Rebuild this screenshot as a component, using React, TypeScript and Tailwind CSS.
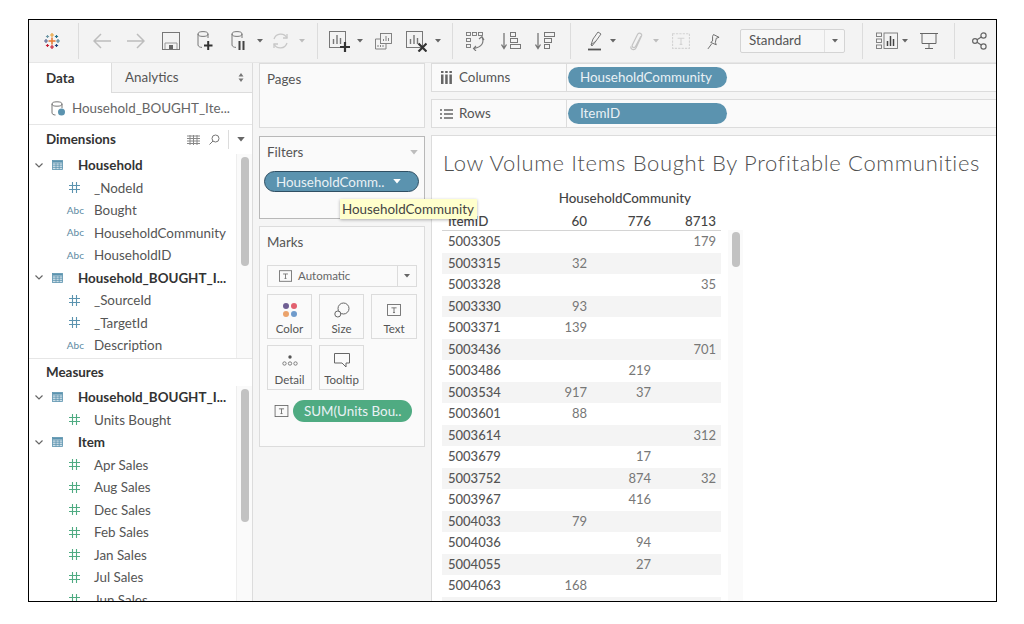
import React from 'react';

const dims = [
  { t: 'g', label: 'Household' },
  { t: 'n', label: '_NodeId' },
  { t: 'a', label: 'Bought' },
  { t: 'a', label: 'HouseholdCommunity' },
  { t: 'a', label: 'HouseholdID' },
  { t: 'g', label: 'Household_BOUGHT_I...' },
  { t: 'n', label: '_SourceId' },
  { t: 'n', label: '_TargetId' },
  { t: 'a', label: 'Description' },
];

const measures = [
  { t: 'g', label: 'Household_BOUGHT_I...' },
  { t: 'm', label: 'Units Bought' },
  { t: 'g', label: 'Item' },
  { t: 'm', label: 'Apr Sales' },
  { t: 'm', label: 'Aug Sales' },
  { t: 'm', label: 'Dec Sales' },
  { t: 'm', label: 'Feb Sales' },
  { t: 'm', label: 'Jan Sales' },
  { t: 'm', label: 'Jul Sales' },
  { t: 'm', label: 'Jun Sales' },
];

const rows = [
  ['5003305', '', '', '179'],
  ['5003315', '32', '', ''],
  ['5003328', '', '', '35'],
  ['5003330', '93', '', ''],
  ['5003371', '139', '', ''],
  ['5003436', '', '', '701'],
  ['5003486', '', '219', ''],
  ['5003534', '917', '37', ''],
  ['5003601', '88', '', ''],
  ['5003614', '', '', '312'],
  ['5003679', '', '17', ''],
  ['5003752', '', '874', '32'],
  ['5003967', '', '416', ''],
  ['5004033', '79', '', ''],
  ['5004036', '', '94', ''],
  ['5004055', '', '27', ''],
  ['5004063', '168', '', ''],
  ['', '', '', ''],
];

type P = { className?: string };

const Sep = ({ className = '' }: P) => <div className={`w-px h-[36px] shrink-0 bg-[#dcdcdc] ${className}`} />;
const Caret = ({ className = '', c = '#666' }: P & { c?: string }) => (
  <svg viewBox="0 0 6 4" className={`w-[6px] h-[4px] shrink-0 ${className}`}><path d="M0 0h6L3 3.6z" fill={c} /></svg>
);

const Logo = ({ className = '' }: P) => {
  const cross = (x: number, y: number, r: number, c: string, w = 1.2) => (
    <path d={`M${x - r} ${y}H${x + r}M${x} ${y - r}V${y + r}`} stroke={c} strokeWidth={w} />
  );
  return (
    <svg viewBox="0 0 18 18" className={`w-[18px] h-[18px] shrink-0 ${className}`} fill="none">
      {cross(9, 9, 3.5, '#e8762c', 1.5)}
      {cross(9, 3, 2, '#e8a33d')}
      {cross(9, 15, 2, '#c72035')}
      {cross(3, 9, 2, '#5b6591')}
      {cross(15, 9, 2, '#59879b')}
      {cross(4.5, 4.5, 1.6, '#7099a6')}
      {cross(13.5, 4.5, 1.6, '#1f6f8b')}
      {cross(4.5, 13.5, 1.6, '#c72035')}
      {cross(13.5, 13.5, 1.6, '#1f447e')}
    </svg>
  );
};

const Arrow = ({ className = '', flip = false }: P & { flip?: boolean }) => (
  <svg viewBox="0 0 18 16" className={`w-[18px] h-[16px] shrink-0 ${className}`} fill="none" stroke="#bdbdbd" strokeWidth="1.5">
    <path d={flip ? 'M0 8H17M10 1l7 7-7 7' : 'M18 8H1M8 1L1 8l7 7'} />
  </svg>
);

const Save = ({ className = '' }: P) => (
  <svg viewBox="0 0 18 18" className={`w-[18px] h-[18px] shrink-0 ${className}`} fill="none" stroke="#777" strokeWidth="1">
    <rect x=".5" y=".5" width="17" height="17" />
    <path d="M3 17v-6h12v6" stroke="#999" />
    <rect x="7" y="13" width="4" height="4" fill="#666" stroke="none" />
  </svg>
);

const Cyl = () => (
  <>
    <ellipse cx="6" cy="3" rx="5" ry="2.4" />
    <path d="M1 3v11c0 1.4 2 2.4 4 2.4M11 3v4" />
  </>
);

const DsPlus = ({ className = '' }: P) => (
  <svg viewBox="0 0 16 20" className={`w-[16px] h-[20px] shrink-0 ${className}`} fill="none" stroke="#777" strokeWidth="1">
    <Cyl />
    <path d="M7 14.5h8.5M11.2 10v9" stroke="#333" strokeWidth="2" />
  </svg>
);

const DsPause = ({ className = '' }: P) => (
  <svg viewBox="0 0 14 20" className={`w-[14px] h-[20px] shrink-0 ${className}`} fill="none" stroke="#777" strokeWidth="1">
    <Cyl />
    <path d="M8.5 10v9M12.5 10v9" stroke="#444" strokeWidth="2" />
  </svg>
);

const Refresh = ({ className = '' }: P) => (
  <svg viewBox="0 0 19 18" className={`w-[19px] h-[18px] shrink-0 ${className}`} fill="none" stroke="#c8c8c8" strokeWidth="1.3">
    <path d="M3 7a7 7 0 0 1 13-1M16 11a7 7 0 0 1-13 1" />
    <path d="M16 2v4h-4M3 16v-4h4" />
  </svg>
);

const BarBox = () => (
  <>
    <rect x=".5" y=".5" width="16" height="16" />
    <path d="M4.5 13V8M8 13V4M11.5 13V7" strokeWidth="1.4" />
  </>
);

const BarPlus = ({ className = '' }: P) => (
  <svg viewBox="0 0 21 21" className={`w-[21px] h-[21px] shrink-0 ${className}`} fill="none" stroke="#777">
    <BarBox />
    <path d="M11 16h10M16 11v10" stroke="#333" strokeWidth="2.2" />
  </svg>
);

const BarDup = ({ className = '' }: P) => (
  <svg viewBox="0 0 17 17" className={`w-[17px] h-[17px] shrink-0 ${className}`} fill="none" stroke="#777" strokeWidth=".9">
    <rect x="5.5" y=".5" width="11" height="10" fill="#f3f3f3" />
    <path d="M8.5 8V6M11 8V3M13.5 8V5" />
    <path d="M5 6H.5v10H11v-5" />
    <path d="M3 14v-2M5.5 14v-2M8 14v-2" />
  </svg>
);

const BarX = ({ className = '' }: P) => (
  <svg viewBox="0 0 21 21" className={`w-[21px] h-[21px] shrink-0 ${className}`} fill="none" stroke="#777">
    <BarBox />
    <path d="M12.5 12.5l8 8M20.5 12.5l-8 8" stroke="#333" strokeWidth="2.2" />
  </svg>
);

const Swap = ({ className = '' }: P) => (
  <svg viewBox="0 0 19 19" className={`w-[19px] h-[19px] shrink-0 ${className}`} fill="none" stroke="#777" strokeWidth=".9">
    <rect x=".5" y=".5" width="4" height="3" />
    <rect x="6.5" y=".5" width="4" height="3" />
    <rect x="12.5" y=".5" width="4" height="3" />
    <rect x=".5" y="6.5" width="4" height="3" />
    <rect x=".5" y="12.5" width="4" height="3" />
    <path d="M16 5c2.5 5.5 0 10-8 11.5M13 7l3-2.500 2 3.500M10 14l-2.500 2.500L10 19" strokeWidth="1.100" />
  </svg>
);

const SortAsc = ({ className = '' }: P) => (
  <svg viewBox="0 0 20 18" className={`w-[20px] h-[18px] shrink-0 ${className}`} fill="none" stroke="#777">
    <path d="M3 1v15M.5 12.500 3 16.500l2.500-4" strokeWidth="1.300" />
    <rect x="9.500" y=".5" width="5" height="4" />
    <rect x="9.500" y="6.500" width="7" height="4" />
    <rect x="9.500" y="12.500" width="10" height="4" />
  </svg>
);

const SortDesc = ({ className = '' }: P) => (
  <svg viewBox="0 0 20 18" className={`w-[20px] h-[18px] shrink-0 ${className}`} fill="none" stroke="#777">
    <path d="M3 1v15M.5 12.500 3 16.500l2.500-4" strokeWidth="1.300" />
    <rect x="9.500" y=".5" width="10" height="4" />
    <rect x="9.500" y="6.500" width="7" height="4" />
    <rect x="9.500" y="12.500" width="5" height="4" />
  </svg>
);

const Highlight = ({ className = '' }: P) => (
  <svg viewBox="0 0 14 20" className={`w-[14px] h-[20px] shrink-0 ${className}`} fill="none" stroke="#777">
    <path d="M3 14 5 8l5-7 3 2-5 7z" />
    <path d="M3 14l1 1 4-5" />
    <path d="M0 18.500h13" strokeWidth="1.800" stroke="#555" />
  </svg>
);

const Clip = ({ className = '' }: P) => (
  <svg viewBox="0 0 13 20" className={`w-[13px] h-[20px] shrink-0 ${className}`} fill="none" stroke="#c4c4c4" strokeWidth="1.200">
    <path d="M11 5 5.500 15.500c-1 2-4 1-3.200-1.500L7.500 3.500c1.200-2.500 5-1 4 1.500L6 17c-1.500 3-6 1.500-5-1.500" />
  </svg>
);

const TBox = ({ className = '', dim = false }: P & { dim?: boolean }) => (
  <svg viewBox="0 0 16 14" className={`shrink-0 ${className}`} fill="none" stroke={dim ? '#d4d4d4' : '#666'}>
    <rect x=".5" y=".5" width="15" height="13" strokeDasharray={dim ? '2 1' : undefined} />
    <path d="M5 4.500h6M8 4.500v5.500M6.800 10h2.400" />
  </svg>
);

const Pin = ({ className = '' }: P) => (
  <svg viewBox="0 0 14 17" className={`w-[13px] h-[17px] shrink-0 ${className}`} fill="none" stroke="#666">
    <path d="M7 1l6 3-3 1-1 4.500 1 2.500-6-2.500 2-1.500 0-5zM5 11l-4 5.500" />
  </svg>
);

const ShowMe = ({ className = '' }: P) => (
  <svg viewBox="0 0 22 18" className={`w-[22px] h-[18px] shrink-0 ${className}`} fill="none" stroke="#777" strokeWidth=".9">
    <rect x=".5" y="1" width="5" height="3.500" />
    <rect x=".5" y="7" width="5" height="3.500" />
    <rect x=".5" y="13" width="5" height="3.500" />
    <rect x="8" y="1" width="13.500" height="15.500" />
    <path d="M11.500 14V9M14.500 14V4M17.500 14V7" stroke="#444" strokeWidth="1.500" />
  </svg>
);

const Present = ({ className = '' }: P) => (
  <svg viewBox="0 0 18 18" className={`w-[18px] h-[18px] shrink-0 ${className}`} fill="none" stroke="#666">
    <path d="M0 1.500h18M2 1.500v10h14v-10M9 11.500v5M5 16.500h8" />
  </svg>
);

const Share = ({ className = '' }: P) => (
  <svg viewBox="0 0 15 18" className={`w-[15px] h-[18px] shrink-0 ${className}`} fill="none" stroke="#666" strokeWidth="1.200">
    <circle cx="3" cy="9" r="2.400" />
    <circle cx="11.500" cy="3.500" r="2.600" />
    <circle cx="11.500" cy="14.500" r="2.600" />
    <path d="M5 7.700 9.300 5M5 10.300 9.300 13" />
  </svg>
);

const TableIcon = () => (
  <svg viewBox="0 0 11 10" className="w-[11px] h-[10px] shrink-0" fill="none" stroke="#5b93af" strokeWidth=".8">
    <rect x=".5" y=".5" width="10" height="9" fill="#cfe0e8" />
    <path d="M.5 3h10M.5 5.200h10M.5 7.400h10M4 3v6.500M7.200 3v6.500" />
    <path d="M.5 1.500h10" strokeWidth="1.600" />
  </svg>
);

const Hash = ({ c }: { c: string }) => (
  <svg viewBox="0 0 11 11" className="w-[11px] h-[11px]" fill="none" stroke={c} strokeWidth="1.100">
    <path d="M3.500 0v11M7.500 0v11M0 3.500h11M0 7.500h11" />
  </svg>
);

const Chevron = () => (
  <svg viewBox="0 0 8 5" className="w-[8px] h-[5px] shrink-0" fill="none" stroke="#666" strokeWidth="1.200">
    <path d="M.5.500 4 4 7.500.500" />
  </svg>
);

const FieldRow = ({ t, label }: { t: string; label: string }) => {
  if (t === 'g') {
    return (
      <div className="h-[22.5px] flex items-center shrink-0">
        <div className="ml-[6px]"><Chevron /></div>
        <div className="ml-[9px]"><TableIcon /></div>
        <span className="ml-[15px] text-[13.4px] font-bold text-[#333] whitespace-nowrap">{label}</span>
      </div>
    );
  }
  return (
    <div className="h-[22.5px] flex items-center shrink-0">
      <div className="w-[65px] flex justify-end pr-[11px]">
        {t === 'a' ? (
          <span className="text-[10px] text-[#5b8aa3] mr-[-1px]">Abc</span>
        ) : (
          <div className="mr-[3px] flex"><Hash c={t === 'm' ? '#4fab82' : '#5b93af'} /></div>
        )}
      </div>
      <span className="text-[13.4px] text-[#555] whitespace-nowrap">{label}</span>
    </div>
  );
};

const Track = ({ thumb }: { thumb: string }) => (
  <div className="w-[16px] shrink-0 bg-[#fafafa] border-l border-[#eeeeee] flex justify-center pt-[3px]">
    <div className={`w-[8px] rounded-full bg-[#c2c2c2] ${thumb}`} />
  </div>
);

const Pill = ({ children, className = '' }: { children: React.ReactNode; className?: string }) => (
  <div className={`h-[21px] rounded-full flex items-center text-[13.4px] text-[#e9f1f5] whitespace-nowrap ${className}`}>{children}</div>
);

const MarkBtn = ({ label, children }: { label: string; children: React.ReactNode }) => (
  <div className="h-[45px] bg-[#fafafa] border border-[#dcdcdc] flex flex-col items-center justify-between pt-[6px] pb-[2px]">
    <div className="h-[17px] flex items-center">{children}</div>
    <span className="text-[11.5px] leading-[14px] text-[#555]">{label}</span>
  </div>
);

const Shelf = ({ icon, label, pill }: { icon: React.ReactNode; label: string; pill: string }) => (
  <div className="h-[29px] flex items-center bg-[#fafafa] border border-[#dcdcdc] border-r-0">
    <div className="w-[14px] ml-[7px] flex justify-center">{icon}</div>
    <span className="ml-[6px] text-[13.4px] text-[#555] w-[107px]">{label}</span>
    <div className="w-px h-full bg-[#dcdcdc]" />
    <Pill className="ml-[1px] w-[159px] bg-[#5b93af] pl-[12px]">{pill}</Pill>
  </div>
);

const App = () => {
  return (
    <div className="w-[1024px] h-[624px] bg-white pt-[19px] pl-[28px] font-[Lato,sans-serif] overflow-hidden">
      <div className="w-[969px] h-[583px] border border-black bg-[#f5f5f5] flex flex-col overflow-hidden">
        <div className="h-[43px] shrink-0 bg-[#f3f3f3] flex items-center border-b border-[#e6e6e6]">
          <Logo className="ml-[14px]" />
          <Sep className="ml-[17px]" />
          <Arrow className="ml-[14px]" />
          <Arrow flip className="ml-[16px]" />
          <Save className="ml-[17px]" />
          <DsPlus className="ml-[17px]" />
          <DsPause className="ml-[18px]" />
          <Caret className="ml-[12px]" />
          <Refresh className="ml-[8px]" />
          <Caret c="#bdbdbd" className="ml-[9px]" />
          <Sep className="ml-[12px]" />
          <BarPlus className="ml-[11px]" />
          <Caret className="ml-[7px]" />
          <BarDup className="ml-[12px]" />
          <BarX className="ml-[14px]" />
          <Caret className="ml-[8px]" />
          <Sep className="ml-[11px]" />
          <Swap className="ml-[13px]" />
          <SortAsc className="ml-[16px]" />
          <SortDesc className="ml-[14px]" />
          <Sep className="ml-[15px]" />
          <Highlight className="ml-[17px]" />
          <Caret className="ml-[8px]" />
          <Clip className="ml-[14px]" />
          <Caret c="#bdbdbd" className="ml-[10px]" />
          <TBox dim className="ml-[13px] w-[18px] h-[16px]" />
          <Pin className="ml-[17px]" />
          <div className="ml-[20px] w-[105px] h-[24px] shrink-0 bg-[#f7f7f7] border border-[#d4d4d4] rounded-[2px] flex items-center">
            <span className="ml-[8px] pb-[1px] text-[13.4px] text-[#555] flex-1">Standard</span>
            <div className="w-px h-full bg-[#e2e2e2]" />
            <div className="w-[19px] flex justify-center"><Caret /></div>
          </div>
          <Sep className="ml-[17px]" />
          <ShowMe className="ml-[13px]" />
          <Caret className="ml-[4px]" />
          <Present className="ml-[12px]" />
          <Sep className="ml-[16px]" />
          <Share className="ml-[17px]" />
        </div>

        <div className="flex-1 flex min-h-0">
          <div className="w-[224px] shrink-0 bg-white border-r border-[#dcdcdc] flex flex-col min-h-0">
            <div className="h-[30px] flex shrink-0">
              <div className="w-[82px] flex items-center pl-[17px] text-[13.4px] font-bold text-[#333]">Data</div>
              <div className="flex-1 bg-[#f5f5f5] border-l border-b border-[#dcdcdc] flex items-center pl-[13px] text-[13.4px] text-[#555]">
                Analytics
                <svg viewBox="0 0 6 9" className="w-[6px] h-[9px] ml-[59px]"><path d="M3 0l2.500 3.500h-5zM3 9 .5 5.500h5z" fill="#777" /></svg>
              </div>
            </div>
            <div className="h-[32px] shrink-0 flex items-center border-b border-[#e6e6e6] pl-[22px]">
              <svg viewBox="0 0 15 15" className="w-[15px] h-[15px] shrink-0" fill="none" stroke="#777">
                <ellipse cx="6" cy="3" rx="5" ry="2.200" />
                <path d="M1 3v9c0 1 1.500 2 3.500 2M11 3v4" />
                <circle cx="10.500" cy="11" r="3.500" fill="#5b93af" stroke="none" />
              </svg>
              <span className="ml-[6px] text-[13.4px] text-[#666] whitespace-nowrap">Household_BOUGHT_Ite...</span>
            </div>
            <div className="h-[29px] shrink-0 flex items-center pl-[17px] pr-[7px]">
              <span className="text-[13.4px] font-bold text-[#333]">Dimensions</span>
              <svg viewBox="0 0 13 10" className="w-[13px] h-[10px] ml-auto" stroke="#888"><path d="M0 1h13M0 3.500h13M0 6h13M0 8.500h13M3 0v10M6.500 0v10M10 0v10" /></svg>
              <svg viewBox="0 0 11 11" className="w-[11px] h-[11px] ml-[9px]" fill="none" stroke="#777"><circle cx="6.500" cy="4.500" r="3.500" /><path d="M4 7 .5 10.500" /></svg>
              <div className="w-px h-[19px] bg-[#dcdcdc] ml-[8px]" />
              <Caret className="ml-[8px] !w-[8px] !h-[5px]" />
            </div>
            <div className="h-[205px] shrink-0 flex border-b border-[#e6e6e6] overflow-hidden">
              <div className="flex-1 flex flex-col overflow-hidden">
                {dims.map((f, i) => <FieldRow key={i} t={f.t} label={f.label} />)}
              </div>
              <Track thumb="h-[109px]" />
            </div>
            <div className="h-[27px] shrink-0 flex items-center pl-[17px] text-[13.4px] font-bold text-[#333]">Measures</div>
            <div className="flex-1 flex min-h-0 overflow-hidden">
              <div className="flex-1 flex flex-col overflow-hidden">
                {measures.map((f, i) => <FieldRow key={i} t={f.t} label={f.label} />)}
              </div>
              <Track thumb="h-[133px]" />
            </div>
          </div>

          <div className="w-[166px] ml-[6px] shrink-0 flex flex-col">
            <div className="h-[65px] bg-[#fafafa] border border-[#dcdcdc] pl-[7px] pt-[5px] text-[13.4px] text-[#555]">Pages</div>
            <div className="relative mt-[8px] h-[83px] bg-[#fafafa] border border-[#b8b8b8] pl-[7px] pt-[5px]">
              <div className="flex items-center justify-between pr-[6px] text-[13.4px] text-[#555]">
                Filters
                <Caret c="#bdbdbd" className="!w-[8px] !h-[5px]" />
              </div>
              <Pill className="mt-[9px] ml-[-3px] w-[155px] bg-[#5b93af] border border-[#2f4f63] pl-[11px]">
                HouseholdComm..
                <Caret c="#fff" className="ml-[9px] !w-[8px] !h-[5px]" />
              </Pill>
              <div className="absolute left-[80px] top-[62px] z-10 w-[137px] h-[20px] bg-[#ffffcc] shadow-[0_1px_3px_rgba(0,0,0,0.3)] pl-[2px] text-[13.4px] leading-[20px] text-[#444] whitespace-nowrap">
                HouseholdCommunity
              </div>
            </div>
            <div className="mt-[7px] h-[221px] bg-[#fafafa] border border-[#dcdcdc] px-[7px] pt-[5px]">
              <div className="text-[13.4px] leading-[20px] text-[#555]">Marks</div>
              <div className="mt-[13px] h-[22px] bg-[#fafafa] border border-[#dcdcdc] flex items-center">
                <TBox className="ml-[11px] w-[13px] h-[12px]" />
                <span className="ml-[6px] text-[11.5px] text-[#666] flex-1">Automatic</span>
                <div className="w-px h-full bg-[#dcdcdc]" />
                <div className="w-[18px] flex justify-center"><Caret /></div>
              </div>
              <div className="mt-[7px] grid grid-cols-[45px_45px_46px] gap-x-[7px] gap-y-[6px] w-[150px]">
                <MarkBtn label="Color">
                  <div className="grid grid-cols-2 gap-[2px]">
                    <div className="w-[6px] h-[6px] rounded-full bg-[#6f5f93]" />
                    <div className="w-[6px] h-[6px] rounded-full bg-[#e2616f]" />
                    <div className="w-[6px] h-[6px] rounded-full bg-[#eba36c]" />
                    <div className="w-[6px] h-[6px] rounded-full bg-[#6f9bcb]" />
                  </div>
                </MarkBtn>
                <MarkBtn label="Size">
                  <svg viewBox="0 0 16 16" className="w-[16px] h-[16px]" fill="none" stroke="#666">
                    <circle cx="9.500" cy="6.500" r="5.500" />
                    <circle cx="3.800" cy="12" r="3" fill="#fafafa" />
                  </svg>
                </MarkBtn>
                <MarkBtn label="Text"><TBox className="w-[14px] h-[12px]" /></MarkBtn>
                <MarkBtn label="Detail">
                  <svg viewBox="0 0 16 11" className="w-[16px] h-[11px]" fill="none" stroke="#666" strokeWidth=".8">
                    <circle cx="8" cy="2" r="1.700" fill="#555" stroke="none" />
                    <circle cx="2.500" cy="8.500" r="1.700" />
                    <circle cx="8" cy="8.500" r="1.700" />
                    <circle cx="13.500" cy="8.500" r="1.700" />
                  </svg>
                </MarkBtn>
                <MarkBtn label="Tooltip">
                  <svg viewBox="0 0 16 15" className="w-[16px] h-[15px]" fill="none" stroke="#666">
                    <path d="M.5.500h15v9.500h-3.500l0 4-4-4H.5z" />
                  </svg>
                </MarkBtn>
              </div>
              <div className="mt-[10px] flex items-center pl-[7px]">
                <TBox className="w-[15px] h-[12px]" />
                <Pill className="ml-[4px] w-[119px] bg-[#4fab82] pl-[11px] !h-[22px]">SUM(Units Bou..</Pill>
              </div>
            </div>
          </div>

          <div className="flex-1 ml-[6px] flex flex-col min-w-0">
            <Shelf
              label="Columns"
              pill="HouseholdCommunity"
              icon={
                <svg viewBox="0 0 11 13" className="w-[11px] h-[13px]" fill="#666">
                  <path d="M0 0h2.500v2H0zM4.200 0h2.500v2H4.200zM8.400 0h2.500v2H8.400zM0 3.500h2.500V13H0zM4.200 3.500h2.500V13H4.200zM8.400 3.500h2.500V13H8.400z" />
                </svg>
              }
            />
            <div className="mt-[7px]">
              <Shelf
                label="Rows"
                pill="ItemID"
                icon={
                  <svg viewBox="0 0 13 10" className="w-[13px] h-[10px]" stroke="#666" strokeWidth="1.400">
                    <path d="M0 1h2M4 1h9M0 5h2M4 5h9M0 9h2M4 9h9" />
                  </svg>
                }
              />
            </div>
            <div className="mt-[7px] flex-1 min-h-0 bg-white border-l border-t border-[#dcdcdc] pl-[10px] overflow-hidden">
              <div className="mt-[14px] ml-[1px] text-[22px] leading-[26px] font-light text-[#4f4f4f] tracking-[0.66px] whitespace-nowrap">
                Low Volume Items Bought By Profitable Communities
              </div>
              <div className="flex mt-[11px]">
                <div className="w-[279px] shrink-0 flex flex-col">
                  <div className="h-[22px] flex items-center justify-end pr-[30px] text-[13.4px] font-medium text-[#444]">HouseholdCommunity</div>
                  <div className="h-[22px] pt-[2px] border-b border-[#d4d4d4] grid grid-cols-[86px_64px_64px_65px] items-center text-[13.4px] font-medium text-[#444]">
                    <span className="pl-[6px]">ItemID</span>
                    <span className="text-right pr-[5px]">60</span>
                    <span className="text-right pr-[5px]">776</span>
                    <span className="text-right pr-[5px]">8713</span>
                  </div>
                  {rows.map((r, i) => (
                    <div key={i} className={`h-[21.5px] shrink-0 grid grid-cols-[86px_64px_64px_65px] items-center text-[13px] ${i % 2 ? 'bg-[#f4f4f4]' : ''}`}>
                      <span className="pl-[6px] font-medium text-[#555]">{r[0]}</span>
                      <span className="text-right pr-[5px] text-[#777]">{r[1]}</span>
                      <span className="text-right pr-[5px] text-[#777]">{r[2]}</span>
                      <span className="text-right pr-[5px] text-[#777]">{r[3]}</span>
                    </div>
                  ))}
                </div>
                <div className="ml-[7px] mt-[43px] w-[15px] bg-[#fafafa] flex justify-center pt-[2px]">
                  <div className="w-[8px] h-[35px] rounded-full bg-[#c2c2c2]" />
                </div>
              </div>
            </div>
          </div>
        </div>
      </div>
    </div>
  );
};

export default App;
